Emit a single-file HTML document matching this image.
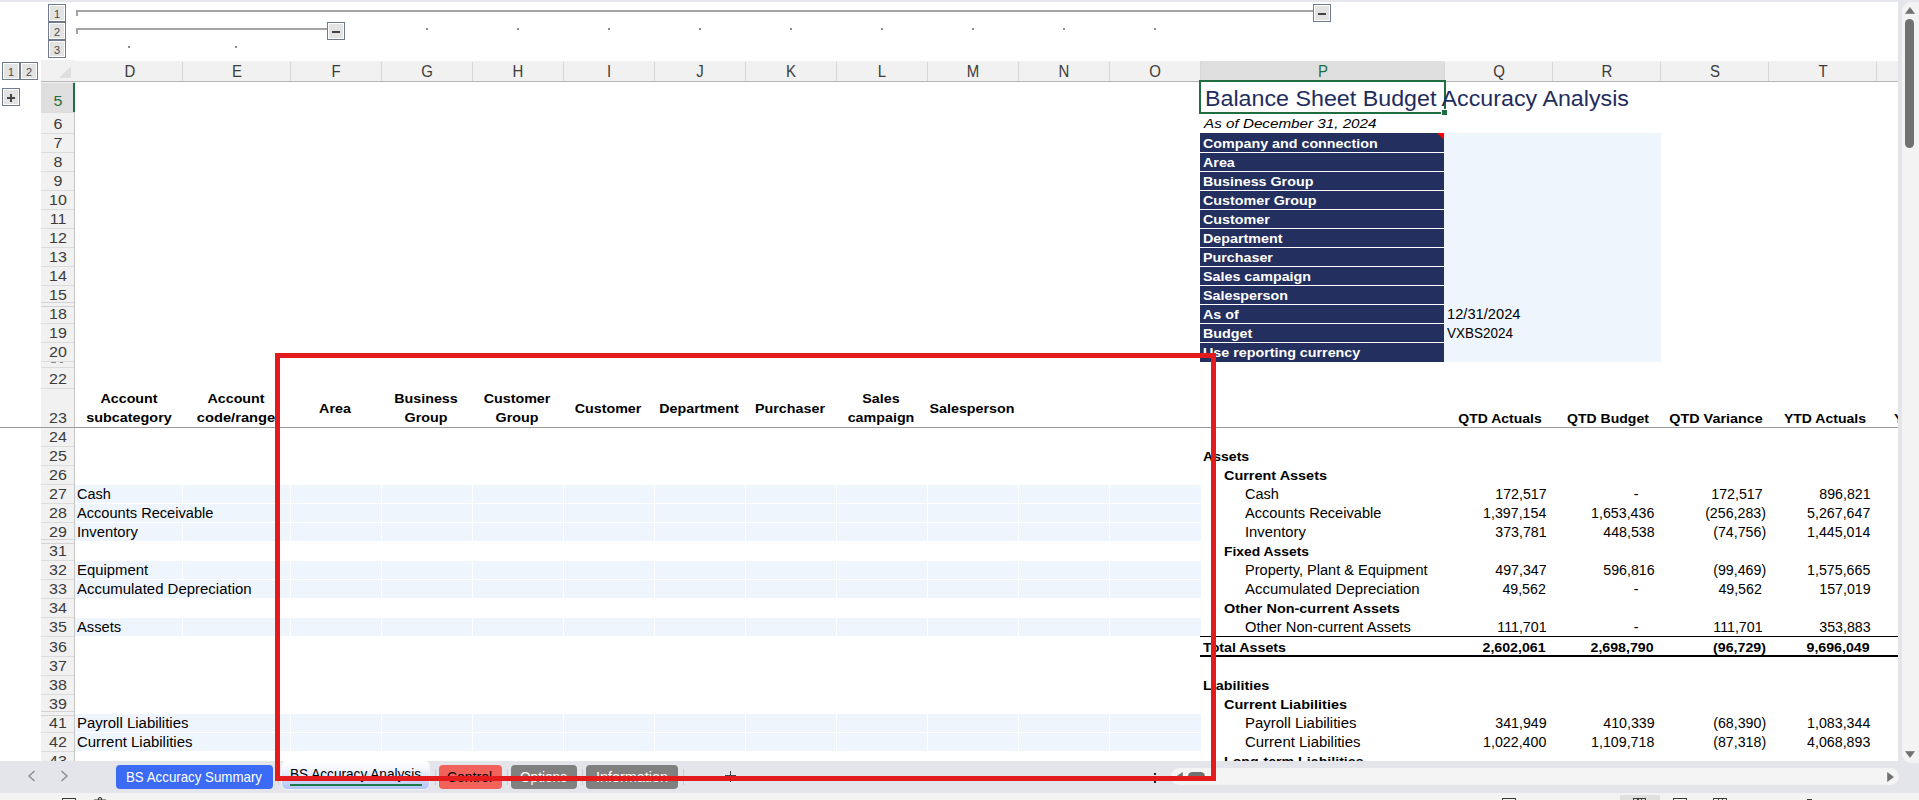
<!DOCTYPE html>
<html><head><meta charset="utf-8"><title>Balance Sheet Budget Accuracy Analysis</title><style>
html,body{margin:0;padding:0;background:#fff}
#r{position:relative;width:1919px;height:800px;overflow:hidden;background:#fff;font-family:'Liberation Sans',sans-serif}
#r div,#r span{position:absolute;box-sizing:content-box}
#r span{white-space:nowrap;line-height:1}
.ob{width:16px;height:16px;border:1px solid #6f7a8c;background:#fff}
.ob i{position:absolute;left:1px;top:1px;width:14px;height:14px;background:#e3e3e3}
</style></head>
<body><div id="r">
<div style="left:0px;top:0px;width:1919px;height:2px;background:#e5e7ec;"></div>
<div class="ob" style="left:48px;top:4px"><i></i></div>
<div class="ob" style="left:48px;top:22px"><i></i></div>
<div class="ob" style="left:48px;top:40px"><i></i></div>
<div style="left:76px;top:10px;width:1237px;height:2px;background:#a3a3a3;"></div>
<div style="left:76px;top:10px;width:2px;height:6px;background:#a3a3a3;"></div>
<div style="left:76px;top:28px;width:251px;height:2px;background:#a3a3a3;"></div>
<div style="left:76px;top:28px;width:2px;height:6px;background:#a3a3a3;"></div>
<div class="ob" style="left:1313px;top:4px"><i></i></div>
<div style="left:1318px;top:13px;width:8px;height:2px;background:#444;"></div>
<div class="ob" style="left:327px;top:22px"><i></i></div>
<div style="left:332px;top:31px;width:8px;height:2px;background:#444;"></div>
<div style="left:426px;top:28px;width:2px;height:2px;background:#8c8c8c;"></div>
<div style="left:517px;top:28px;width:2px;height:2px;background:#8c8c8c;"></div>
<div style="left:608px;top:28px;width:2px;height:2px;background:#8c8c8c;"></div>
<div style="left:699px;top:28px;width:2px;height:2px;background:#8c8c8c;"></div>
<div style="left:790px;top:28px;width:2px;height:2px;background:#8c8c8c;"></div>
<div style="left:881px;top:28px;width:2px;height:2px;background:#8c8c8c;"></div>
<div style="left:972px;top:28px;width:2px;height:2px;background:#8c8c8c;"></div>
<div style="left:1063px;top:28px;width:2px;height:2px;background:#8c8c8c;"></div>
<div style="left:1154px;top:28px;width:2px;height:2px;background:#8c8c8c;"></div>
<div style="left:128px;top:46px;width:2px;height:2px;background:#8c8c8c;"></div>
<div style="left:235px;top:46px;width:2px;height:2px;background:#8c8c8c;"></div>
<div class="ob" style="left:2px;top:62px"><i></i></div>
<div class="ob" style="left:20px;top:62px"><i></i></div>
<div class="ob" style="left:2px;top:88px"><i></i></div>
<div style="left:7px;top:96.7px;width:8px;height:2px;background:#444;"></div>
<div style="left:10px;top:93.7px;width:2px;height:8px;background:#444;"></div>
<div style="left:41px;top:60px;width:34px;height:21px;background:#f1f1f1;"></div>
<svg style="position:absolute;left:58px;top:65px" width="14" height="14"><path d="M13 1V13H1Z" fill="#dfdfdf"/></svg>
<div style="left:75px;top:61px;width:1823px;height:20px;background:#f1f1f1;"></div>
<div style="left:41px;top:81px;width:1857px;height:1px;background:#b5b5b5;"></div>
<div style="left:1200px;top:61px;width:244px;height:20px;background:#dedede;"></div>
<div style="left:1200px;top:80px;width:244px;height:2px;background:#1e6e42;"></div>
<div style="left:181.5px;top:62px;width:1px;height:19px;background:#d6d6d6;"></div>
<div style="left:289.5px;top:62px;width:1px;height:19px;background:#d6d6d6;"></div>
<div style="left:380.5px;top:62px;width:1px;height:19px;background:#d6d6d6;"></div>
<div style="left:471.5px;top:62px;width:1px;height:19px;background:#d6d6d6;"></div>
<div style="left:562.5px;top:62px;width:1px;height:19px;background:#d6d6d6;"></div>
<div style="left:653.5px;top:62px;width:1px;height:19px;background:#d6d6d6;"></div>
<div style="left:744.5px;top:62px;width:1px;height:19px;background:#d6d6d6;"></div>
<div style="left:835.5px;top:62px;width:1px;height:19px;background:#d6d6d6;"></div>
<div style="left:926.5px;top:62px;width:1px;height:19px;background:#d6d6d6;"></div>
<div style="left:1017.5px;top:62px;width:1px;height:19px;background:#d6d6d6;"></div>
<div style="left:1108.5px;top:62px;width:1px;height:19px;background:#d6d6d6;"></div>
<div style="left:1199.5px;top:62px;width:1px;height:19px;background:#d6d6d6;"></div>
<div style="left:1443.5px;top:62px;width:1px;height:19px;background:#d6d6d6;"></div>
<div style="left:1551.5px;top:62px;width:1px;height:19px;background:#d6d6d6;"></div>
<div style="left:1659.5px;top:62px;width:1px;height:19px;background:#d6d6d6;"></div>
<div style="left:1767.5px;top:62px;width:1px;height:19px;background:#d6d6d6;"></div>
<div style="left:1875.5px;top:62px;width:1px;height:19px;background:#d6d6d6;"></div>
<div style="left:41px;top:82px;width:33.5px;height:679px;background:#f1f1f1;"></div>
<div style="left:74px;top:82px;width:1px;height:679px;background:#c6c6c6;"></div>
<div style="left:41px;top:82.5px;width:33px;height:29.8px;background:#dedede;"></div>
<div style="left:73px;top:82.5px;width:1.8px;height:29.8px;background:#1e6e42;"></div>
<div style="left:41px;top:111.5px;width:33px;height:1px;background:#dcdcdc;"></div>
<div style="left:41px;top:132.5px;width:33px;height:1px;background:#dcdcdc;"></div>
<div style="left:41px;top:151.5px;width:33px;height:1px;background:#dcdcdc;"></div>
<div style="left:41px;top:170.5px;width:33px;height:1px;background:#dcdcdc;"></div>
<div style="left:41px;top:189.5px;width:33px;height:1px;background:#dcdcdc;"></div>
<div style="left:41px;top:208.5px;width:33px;height:1px;background:#dcdcdc;"></div>
<div style="left:41px;top:227.5px;width:33px;height:1px;background:#dcdcdc;"></div>
<div style="left:41px;top:246.5px;width:33px;height:1px;background:#dcdcdc;"></div>
<div style="left:41px;top:265.5px;width:33px;height:1px;background:#dcdcdc;"></div>
<div style="left:41px;top:284.5px;width:33px;height:1px;background:#dcdcdc;"></div>
<div style="left:41px;top:302px;width:33px;height:1px;background:#d4d4d4;"></div>
<div style="left:41px;top:306px;width:33px;height:1px;background:#d4d4d4;"></div>
<div style="left:41px;top:322.5px;width:33px;height:1px;background:#dcdcdc;"></div>
<div style="left:41px;top:341.5px;width:33px;height:1px;background:#dcdcdc;"></div>
<div style="left:41px;top:360.5px;width:33px;height:1px;background:#dcdcdc;"></div>
<div style="left:41px;top:387.5px;width:33px;height:1px;background:#dcdcdc;"></div>
<div style="left:41px;top:426.5px;width:33px;height:1px;background:#dcdcdc;"></div>
<div style="left:41px;top:445.5px;width:33px;height:1px;background:#dcdcdc;"></div>
<div style="left:41px;top:464.5px;width:33px;height:1px;background:#dcdcdc;"></div>
<div style="left:41px;top:483.5px;width:33px;height:1px;background:#dcdcdc;"></div>
<div style="left:41px;top:502.5px;width:33px;height:1px;background:#dcdcdc;"></div>
<div style="left:41px;top:521.5px;width:33px;height:1px;background:#dcdcdc;"></div>
<div style="left:41px;top:539px;width:33px;height:1px;background:#d4d4d4;"></div>
<div style="left:41px;top:543px;width:33px;height:1px;background:#d4d4d4;"></div>
<div style="left:41px;top:559.5px;width:33px;height:1px;background:#dcdcdc;"></div>
<div style="left:41px;top:578.5px;width:33px;height:1px;background:#dcdcdc;"></div>
<div style="left:41px;top:597.5px;width:33px;height:1px;background:#dcdcdc;"></div>
<div style="left:41px;top:616.5px;width:33px;height:1px;background:#dcdcdc;"></div>
<div style="left:41px;top:635.5px;width:33px;height:1px;background:#dcdcdc;"></div>
<div style="left:41px;top:655.5px;width:33px;height:1px;background:#dcdcdc;"></div>
<div style="left:41px;top:674.5px;width:33px;height:1px;background:#dcdcdc;"></div>
<div style="left:41px;top:693.5px;width:33px;height:1px;background:#dcdcdc;"></div>
<div style="left:41px;top:711px;width:33px;height:1px;background:#d4d4d4;"></div>
<div style="left:41px;top:715px;width:33px;height:1px;background:#d4d4d4;"></div>
<div style="left:41px;top:731.5px;width:33px;height:1px;background:#dcdcdc;"></div>
<div style="left:41px;top:750.5px;width:33px;height:1px;background:#dcdcdc;"></div>
<div style="left:41px;top:366.5px;width:33px;height:1px;background:#dcdcdc;"></div>
<div style="left:50.5px;top:362.3px;width:5px;height:1px;background:#8a8a8a;"></div>
<div style="left:60px;top:362.3px;width:2.5px;height:1px;background:#8a8a8a;"></div>
<div style="left:75px;top:485px;width:1125.7px;height:18px;background:#eef5fd;"></div>
<div style="left:181.7px;top:485px;width:1.3px;height:18px;background:#fff;"></div>
<div style="left:289.7px;top:485px;width:1.3px;height:18px;background:#fff;"></div>
<div style="left:380.7px;top:485px;width:1.3px;height:18px;background:#fff;"></div>
<div style="left:471.7px;top:485px;width:1.3px;height:18px;background:#fff;"></div>
<div style="left:562.7px;top:485px;width:1.3px;height:18px;background:#fff;"></div>
<div style="left:653.7px;top:485px;width:1.3px;height:18px;background:#fff;"></div>
<div style="left:744.7px;top:485px;width:1.3px;height:18px;background:#fff;"></div>
<div style="left:835.7px;top:485px;width:1.3px;height:18px;background:#fff;"></div>
<div style="left:926.7px;top:485px;width:1.3px;height:18px;background:#fff;"></div>
<div style="left:1017.7px;top:485px;width:1.3px;height:18px;background:#fff;"></div>
<div style="left:1108.7px;top:485px;width:1.3px;height:18px;background:#fff;"></div>
<div style="left:75px;top:504px;width:1125.7px;height:18px;background:#eef5fd;"></div>
<div style="left:289.7px;top:504px;width:1.3px;height:18px;background:#fff;"></div>
<div style="left:380.7px;top:504px;width:1.3px;height:18px;background:#fff;"></div>
<div style="left:471.7px;top:504px;width:1.3px;height:18px;background:#fff;"></div>
<div style="left:562.7px;top:504px;width:1.3px;height:18px;background:#fff;"></div>
<div style="left:653.7px;top:504px;width:1.3px;height:18px;background:#fff;"></div>
<div style="left:744.7px;top:504px;width:1.3px;height:18px;background:#fff;"></div>
<div style="left:835.7px;top:504px;width:1.3px;height:18px;background:#fff;"></div>
<div style="left:926.7px;top:504px;width:1.3px;height:18px;background:#fff;"></div>
<div style="left:1017.7px;top:504px;width:1.3px;height:18px;background:#fff;"></div>
<div style="left:1108.7px;top:504px;width:1.3px;height:18px;background:#fff;"></div>
<div style="left:75px;top:523px;width:1125.7px;height:18px;background:#eef5fd;"></div>
<div style="left:181.7px;top:523px;width:1.3px;height:18px;background:#fff;"></div>
<div style="left:289.7px;top:523px;width:1.3px;height:18px;background:#fff;"></div>
<div style="left:380.7px;top:523px;width:1.3px;height:18px;background:#fff;"></div>
<div style="left:471.7px;top:523px;width:1.3px;height:18px;background:#fff;"></div>
<div style="left:562.7px;top:523px;width:1.3px;height:18px;background:#fff;"></div>
<div style="left:653.7px;top:523px;width:1.3px;height:18px;background:#fff;"></div>
<div style="left:744.7px;top:523px;width:1.3px;height:18px;background:#fff;"></div>
<div style="left:835.7px;top:523px;width:1.3px;height:18px;background:#fff;"></div>
<div style="left:926.7px;top:523px;width:1.3px;height:18px;background:#fff;"></div>
<div style="left:1017.7px;top:523px;width:1.3px;height:18px;background:#fff;"></div>
<div style="left:1108.7px;top:523px;width:1.3px;height:18px;background:#fff;"></div>
<div style="left:75px;top:561px;width:1125.7px;height:18px;background:#eef5fd;"></div>
<div style="left:181.7px;top:561px;width:1.3px;height:18px;background:#fff;"></div>
<div style="left:289.7px;top:561px;width:1.3px;height:18px;background:#fff;"></div>
<div style="left:380.7px;top:561px;width:1.3px;height:18px;background:#fff;"></div>
<div style="left:471.7px;top:561px;width:1.3px;height:18px;background:#fff;"></div>
<div style="left:562.7px;top:561px;width:1.3px;height:18px;background:#fff;"></div>
<div style="left:653.7px;top:561px;width:1.3px;height:18px;background:#fff;"></div>
<div style="left:744.7px;top:561px;width:1.3px;height:18px;background:#fff;"></div>
<div style="left:835.7px;top:561px;width:1.3px;height:18px;background:#fff;"></div>
<div style="left:926.7px;top:561px;width:1.3px;height:18px;background:#fff;"></div>
<div style="left:1017.7px;top:561px;width:1.3px;height:18px;background:#fff;"></div>
<div style="left:1108.7px;top:561px;width:1.3px;height:18px;background:#fff;"></div>
<div style="left:75px;top:580px;width:1125.7px;height:18px;background:#eef5fd;"></div>
<div style="left:289.7px;top:580px;width:1.3px;height:18px;background:#fff;"></div>
<div style="left:380.7px;top:580px;width:1.3px;height:18px;background:#fff;"></div>
<div style="left:471.7px;top:580px;width:1.3px;height:18px;background:#fff;"></div>
<div style="left:562.7px;top:580px;width:1.3px;height:18px;background:#fff;"></div>
<div style="left:653.7px;top:580px;width:1.3px;height:18px;background:#fff;"></div>
<div style="left:744.7px;top:580px;width:1.3px;height:18px;background:#fff;"></div>
<div style="left:835.7px;top:580px;width:1.3px;height:18px;background:#fff;"></div>
<div style="left:926.7px;top:580px;width:1.3px;height:18px;background:#fff;"></div>
<div style="left:1017.7px;top:580px;width:1.3px;height:18px;background:#fff;"></div>
<div style="left:1108.7px;top:580px;width:1.3px;height:18px;background:#fff;"></div>
<div style="left:75px;top:618px;width:1125.7px;height:18px;background:#eef5fd;"></div>
<div style="left:181.7px;top:618px;width:1.3px;height:18px;background:#fff;"></div>
<div style="left:289.7px;top:618px;width:1.3px;height:18px;background:#fff;"></div>
<div style="left:380.7px;top:618px;width:1.3px;height:18px;background:#fff;"></div>
<div style="left:471.7px;top:618px;width:1.3px;height:18px;background:#fff;"></div>
<div style="left:562.7px;top:618px;width:1.3px;height:18px;background:#fff;"></div>
<div style="left:653.7px;top:618px;width:1.3px;height:18px;background:#fff;"></div>
<div style="left:744.7px;top:618px;width:1.3px;height:18px;background:#fff;"></div>
<div style="left:835.7px;top:618px;width:1.3px;height:18px;background:#fff;"></div>
<div style="left:926.7px;top:618px;width:1.3px;height:18px;background:#fff;"></div>
<div style="left:1017.7px;top:618px;width:1.3px;height:18px;background:#fff;"></div>
<div style="left:1108.7px;top:618px;width:1.3px;height:18px;background:#fff;"></div>
<div style="left:75px;top:714px;width:1125.7px;height:18px;background:#eef5fd;"></div>
<div style="left:289.7px;top:714px;width:1.3px;height:18px;background:#fff;"></div>
<div style="left:380.7px;top:714px;width:1.3px;height:18px;background:#fff;"></div>
<div style="left:471.7px;top:714px;width:1.3px;height:18px;background:#fff;"></div>
<div style="left:562.7px;top:714px;width:1.3px;height:18px;background:#fff;"></div>
<div style="left:653.7px;top:714px;width:1.3px;height:18px;background:#fff;"></div>
<div style="left:744.7px;top:714px;width:1.3px;height:18px;background:#fff;"></div>
<div style="left:835.7px;top:714px;width:1.3px;height:18px;background:#fff;"></div>
<div style="left:926.7px;top:714px;width:1.3px;height:18px;background:#fff;"></div>
<div style="left:1017.7px;top:714px;width:1.3px;height:18px;background:#fff;"></div>
<div style="left:1108.7px;top:714px;width:1.3px;height:18px;background:#fff;"></div>
<div style="left:75px;top:733px;width:1125.7px;height:18px;background:#eef5fd;"></div>
<div style="left:289.7px;top:733px;width:1.3px;height:18px;background:#fff;"></div>
<div style="left:380.7px;top:733px;width:1.3px;height:18px;background:#fff;"></div>
<div style="left:471.7px;top:733px;width:1.3px;height:18px;background:#fff;"></div>
<div style="left:562.7px;top:733px;width:1.3px;height:18px;background:#fff;"></div>
<div style="left:653.7px;top:733px;width:1.3px;height:18px;background:#fff;"></div>
<div style="left:744.7px;top:733px;width:1.3px;height:18px;background:#fff;"></div>
<div style="left:835.7px;top:733px;width:1.3px;height:18px;background:#fff;"></div>
<div style="left:926.7px;top:733px;width:1.3px;height:18px;background:#fff;"></div>
<div style="left:1017.7px;top:733px;width:1.3px;height:18px;background:#fff;"></div>
<div style="left:1108.7px;top:733px;width:1.3px;height:18px;background:#fff;"></div>
<div style="left:1444px;top:133px;width:217px;height:229px;background:#eef5fd;"></div>
<div style="left:1200px;top:133px;width:244.3px;height:19px;background:#232f5e;"></div>
<div style="left:1200px;top:153px;width:244.3px;height:18px;background:#232f5e;"></div>
<div style="left:1200px;top:172px;width:244.3px;height:18px;background:#232f5e;"></div>
<div style="left:1200px;top:191px;width:244.3px;height:18px;background:#232f5e;"></div>
<div style="left:1200px;top:210px;width:244.3px;height:18px;background:#232f5e;"></div>
<div style="left:1200px;top:229px;width:244.3px;height:18px;background:#232f5e;"></div>
<div style="left:1200px;top:248px;width:244.3px;height:18px;background:#232f5e;"></div>
<div style="left:1200px;top:267px;width:244.3px;height:18px;background:#232f5e;"></div>
<div style="left:1200px;top:286px;width:244.3px;height:18px;background:#232f5e;"></div>
<div style="left:1200px;top:305px;width:244.3px;height:18px;background:#232f5e;"></div>
<div style="left:1200px;top:324px;width:244.3px;height:18px;background:#232f5e;"></div>
<div style="left:1200px;top:343px;width:244.3px;height:19px;background:#232f5e;"></div>
<svg style="position:absolute;left:1437px;top:133px" width="7" height="7"><path d="M0 0H7V7Z" fill="#ff0000"/></svg>
<div style="left:1199px;top:80px;width:243px;height:30px;border:2px solid #1e6e42"></div>
<div style="left:1440.7px;top:108.6px;width:5.3px;height:5.3px;background:#1e6e42;border:1px solid #fff"></div>
<div style="left:1200px;top:636px;width:698px;height:1px;background:#000;"></div>
<div style="left:1200px;top:655px;width:698px;height:2px;background:#000;"></div>
<div style="left:0px;top:427px;width:1898px;height:1px;background:#9b9b9b;"></div>
<div style="left:0px;top:761px;width:1919px;height:32px;background:#e3e5ea;z-index:5"></div>
<div style="left:1898px;top:2px;width:21px;height:759px;background:#e3e5ea;z-index:5"></div>
<div style="left:1902px;top:2px;width:17px;height:761px;background:#f3f3f3;border-radius:9px 0 0 9px;z-index:6"></div>
<div style="left:1905px;top:19px;width:9px;height:129px;background:#707070;border-radius:5px;z-index:7"></div>
<svg style="position:absolute;left:1905px;top:7px;z-index:7" width="10" height="7"><path d="M5 0.5L9.5 6.5H0.5Z" fill="#707070" stroke="#707070" stroke-width="0.6" stroke-linejoin="round"/></svg>
<svg style="position:absolute;left:1905px;top:751px;z-index:7" width="10" height="7"><path d="M5 6.5L9.5 0.5H0.5Z" fill="#707070" stroke="#707070" stroke-width="0.6" stroke-linejoin="round"/></svg>
<div style="left:1171px;top:768px;width:728px;height:17px;background:#f4f4f4;border-radius:9px;z-index:6"></div>
<svg style="position:absolute;left:1887px;top:772px;z-index:7" width="7" height="10"><path d="M6.5 5L0.5 9.5V0.5Z" fill="#707070" stroke="#707070" stroke-width="0.6" stroke-linejoin="round"/></svg>
<svg style="position:absolute;left:1176px;top:772px;z-index:7" width="7" height="9"><path d="M0.5 4.5L6.5 8.5V0.5Z" fill="#707070" stroke="#707070" stroke-width="0.6" stroke-linejoin="round"/></svg>
<div style="left:1188px;top:772px;width:17px;height:9px;background:#707070;border-radius:5px;z-index:7"></div>
<div style="left:1154.2px;top:773.1px;width:1.9px;height:1.9px;background:#222;z-index:7"></div>
<div style="left:1154.2px;top:781.3px;width:1.9px;height:1.9px;background:#222;z-index:7"></div>
<div style="left:116px;top:765px;width:157px;height:24px;background:#3b6af5;border-radius:4px;z-index:6"></div>
<div style="left:282px;top:761px;width:147px;height:28px;background:linear-gradient(#ffffff 0%,#f6f8fe 25%,#e3e9fc 50%,#c3d0f9 80%,#b2c4f7 100%);border-radius:5px;box-shadow:0 0 0 1px rgba(255,255,255,0.55);z-index:6"></div>
<div style="left:290px;top:784px;width:132px;height:2px;background:#1e7b45;z-index:7"></div>
<div style="left:439px;top:765px;width:63px;height:24px;background:#f0625a;border-radius:4px;z-index:6"></div>
<div style="left:511px;top:765px;width:66px;height:24px;background:#808080;border-radius:4px;z-index:6"></div>
<div style="left:586px;top:765px;width:92px;height:24px;background:#808080;border-radius:4px;z-index:6"></div>
<div style="left:277.5px;top:769px;width:1px;height:16px;background:#c9ccd3;z-index:6"></div>
<div style="left:434.5px;top:769px;width:1px;height:16px;background:#c9ccd3;z-index:6"></div>
<div style="left:506.5px;top:769px;width:1px;height:16px;background:#c9ccd3;z-index:6"></div>
<div style="left:581.5px;top:769px;width:1px;height:16px;background:#c9ccd3;z-index:6"></div>
<div style="left:682.5px;top:769px;width:1px;height:16px;background:#c9ccd3;z-index:6"></div>
<svg style="position:absolute;left:27px;top:770px;z-index:7" width="10" height="12"><path d="M7.5 1L2 6L7.5 11" fill="none" stroke="#8a8a8a" stroke-width="1.3"/></svg>
<svg style="position:absolute;left:59px;top:770px;z-index:7" width="10" height="12"><path d="M2.5 1L8 6L2.5 11" fill="none" stroke="#8a8a8a" stroke-width="1.3"/></svg>
<div style="left:725.3px;top:775px;width:10.5px;height:1.3px;background:#444;z-index:7"></div>
<div style="left:729.8px;top:770.8px;width:1.3px;height:11px;background:#444;z-index:7"></div>
<div style="left:0px;top:793px;width:1919px;height:7px;background:#f3f3f3;z-index:6"></div>
<div style="left:62px;top:797.8px;width:11.6px;height:6px;border:1.2px solid #3a3a3a;z-index:7"></div>
<svg style="position:absolute;left:93px;top:796px;z-index:7" width="14" height="4"><path d="M5.5 4V2.5Q7 0.5 8.5 2.5V4M1 4.2H13" fill="none" stroke="#3a3a3a" stroke-width="1.2"/></svg>
<div style="left:1502px;top:798.4px;width:11.6px;height:6px;border:1.2px solid #3a3a3a;z-index:7"></div>
<div style="left:1620px;top:794.6px;width:40px;height:6px;background:#e0e0e0;z-index:6"></div>
<div style="left:1633px;top:797.6px;width:10.6px;height:6px;border:1.2px solid #3a3a3a;z-index:7"></div>
<div style="left:1637.3333333333333px;top:797.6px;width:1.2px;height:6px;background:#3a3a3a;z-index:7"></div>
<div style="left:1641.0666666666668px;top:797.6px;width:1.2px;height:6px;background:#3a3a3a;z-index:7"></div>
<div style="left:1673px;top:797.6px;width:11.6px;height:6px;border:1.2px solid #3a3a3a;z-index:7"></div>
<div style="left:1676px;top:799.8000000000001px;width:8px;height:4px;background:#3a3a3a;z-index:7"></div>
<div style="left:1713px;top:797.6px;width:11.6px;height:6px;border:1.2px solid #3a3a3a;z-index:7"></div>
<div style="left:1717.6666666666667px;top:797.6px;width:1.2px;height:6px;background:#3a3a3a;z-index:7"></div>
<div style="left:1721.7333333333333px;top:797.6px;width:1.2px;height:6px;background:#3a3a3a;z-index:7"></div>
<div style="left:1807px;top:798.8px;width:5px;height:1.5px;background:#3a3a3a;z-index:7"></div>
<div style="left:275px;top:353px;width:931px;height:418px;border:5px solid #e41b1c;z-index:20"></div>
<span style="top:8.69px;font-size:11px;color:#4a4a4a;left:57px;transform:translateX(-50%) ;">1</span>
<span style="top:26.69px;font-size:11px;color:#4a4a4a;left:57px;transform:translateX(-50%) ;">2</span>
<span style="top:44.69px;font-size:11px;color:#4a4a4a;left:57px;transform:translateX(-50%) ;">3</span>
<span style="top:66.69px;font-size:11px;color:#4a4a4a;left:11px;transform:translateX(-50%) ;">1</span>
<span style="top:66.69px;font-size:11px;color:#4a4a4a;left:29px;transform:translateX(-50%) ;">2</span>
<span style="top:63.99px;font-size:15.6px;color:#3b3b3b;left:129.8px;transform:translateX(-50%) scaleX(0.9600);">D</span>
<span style="top:63.99px;font-size:15.6px;color:#3b3b3b;left:236.8px;transform:translateX(-50%) scaleX(0.9600);">E</span>
<span style="top:63.99px;font-size:15.6px;color:#3b3b3b;left:336.3px;transform:translateX(-50%) scaleX(0.9600);">F</span>
<span style="top:63.99px;font-size:15.6px;color:#3b3b3b;left:427.3px;transform:translateX(-50%) scaleX(0.9600);">G</span>
<span style="top:63.99px;font-size:15.6px;color:#3b3b3b;left:518.3px;transform:translateX(-50%) scaleX(0.9600);">H</span>
<span style="top:63.99px;font-size:15.6px;color:#3b3b3b;left:609.3px;transform:translateX(-50%) scaleX(0.9600);">I</span>
<span style="top:63.99px;font-size:15.6px;color:#3b3b3b;left:700.3px;transform:translateX(-50%) scaleX(0.9600);">J</span>
<span style="top:63.99px;font-size:15.6px;color:#3b3b3b;left:791.3px;transform:translateX(-50%) scaleX(0.9600);">K</span>
<span style="top:63.99px;font-size:15.6px;color:#3b3b3b;left:882.3px;transform:translateX(-50%) scaleX(0.9600);">L</span>
<span style="top:63.99px;font-size:15.6px;color:#3b3b3b;left:973.3px;transform:translateX(-50%) scaleX(0.9600);">M</span>
<span style="top:63.99px;font-size:15.6px;color:#3b3b3b;left:1064.3px;transform:translateX(-50%) scaleX(0.9600);">N</span>
<span style="top:63.99px;font-size:15.6px;color:#3b3b3b;left:1155.3px;transform:translateX(-50%) scaleX(0.9600);">O</span>
<span style="top:63.99px;font-size:15.6px;color:#1e6e42;left:1322.8px;transform:translateX(-50%) scaleX(0.9600);">P</span>
<span style="top:63.99px;font-size:15.6px;color:#3b3b3b;left:1498.8px;transform:translateX(-50%) scaleX(0.9600);">Q</span>
<span style="top:63.99px;font-size:15.6px;color:#3b3b3b;left:1606.8px;transform:translateX(-50%) scaleX(0.9600);">R</span>
<span style="top:63.99px;font-size:15.6px;color:#3b3b3b;left:1714.8px;transform:translateX(-50%) scaleX(0.9600);">S</span>
<span style="top:63.99px;font-size:15.6px;color:#3b3b3b;left:1822.8px;transform:translateX(-50%) scaleX(0.9600);">T</span>
<span style="top:92.96px;font-size:15.4px;color:#1e6e42;left:58px;transform:translateX(-50%) scaleX(1.0400);">5</span>
<span style="top:115.96px;font-size:15.4px;color:#3b3b3b;left:58px;transform:translateX(-50%) scaleX(1.0400);">6</span>
<span style="top:134.96px;font-size:15.4px;color:#3b3b3b;left:58px;transform:translateX(-50%) scaleX(1.0400);">7</span>
<span style="top:153.96px;font-size:15.4px;color:#3b3b3b;left:58px;transform:translateX(-50%) scaleX(1.0400);">8</span>
<span style="top:172.96px;font-size:15.4px;color:#3b3b3b;left:58px;transform:translateX(-50%) scaleX(1.0400);">9</span>
<span style="top:191.96px;font-size:15.4px;color:#3b3b3b;left:58px;transform:translateX(-50%) scaleX(1.0400);">10</span>
<span style="top:210.96px;font-size:15.4px;color:#3b3b3b;left:58px;transform:translateX(-50%) scaleX(1.0400);">11</span>
<span style="top:229.96px;font-size:15.4px;color:#3b3b3b;left:58px;transform:translateX(-50%) scaleX(1.0400);">12</span>
<span style="top:248.96px;font-size:15.4px;color:#3b3b3b;left:58px;transform:translateX(-50%) scaleX(1.0400);">13</span>
<span style="top:267.96px;font-size:15.4px;color:#3b3b3b;left:58px;transform:translateX(-50%) scaleX(1.0400);">14</span>
<span style="top:286.96px;font-size:15.4px;color:#3b3b3b;left:58px;transform:translateX(-50%) scaleX(1.0400);">15</span>
<span style="top:305.96px;font-size:15.4px;color:#3b3b3b;left:58px;transform:translateX(-50%) scaleX(1.0400);">18</span>
<span style="top:324.96px;font-size:15.4px;color:#3b3b3b;left:58px;transform:translateX(-50%) scaleX(1.0400);">19</span>
<span style="top:343.96px;font-size:15.4px;color:#3b3b3b;left:58px;transform:translateX(-50%) scaleX(1.0400);">20</span>
<span style="top:370.96px;font-size:15.4px;color:#3b3b3b;left:58px;transform:translateX(-50%) scaleX(1.0400);">22</span>
<span style="top:409.96px;font-size:15.4px;color:#3b3b3b;left:58px;transform:translateX(-50%) scaleX(1.0400);">23</span>
<span style="top:428.96px;font-size:15.4px;color:#3b3b3b;left:58px;transform:translateX(-50%) scaleX(1.0400);">24</span>
<span style="top:447.96px;font-size:15.4px;color:#3b3b3b;left:58px;transform:translateX(-50%) scaleX(1.0400);">25</span>
<span style="top:466.96px;font-size:15.4px;color:#3b3b3b;left:58px;transform:translateX(-50%) scaleX(1.0400);">26</span>
<span style="top:485.96px;font-size:15.4px;color:#3b3b3b;left:58px;transform:translateX(-50%) scaleX(1.0400);">27</span>
<span style="top:504.96px;font-size:15.4px;color:#3b3b3b;left:58px;transform:translateX(-50%) scaleX(1.0400);">28</span>
<span style="top:523.96px;font-size:15.4px;color:#3b3b3b;left:58px;transform:translateX(-50%) scaleX(1.0400);">29</span>
<span style="top:542.96px;font-size:15.4px;color:#3b3b3b;left:58px;transform:translateX(-50%) scaleX(1.0400);">31</span>
<span style="top:561.96px;font-size:15.4px;color:#3b3b3b;left:58px;transform:translateX(-50%) scaleX(1.0400);">32</span>
<span style="top:580.96px;font-size:15.4px;color:#3b3b3b;left:58px;transform:translateX(-50%) scaleX(1.0400);">33</span>
<span style="top:599.96px;font-size:15.4px;color:#3b3b3b;left:58px;transform:translateX(-50%) scaleX(1.0400);">34</span>
<span style="top:618.96px;font-size:15.4px;color:#3b3b3b;left:58px;transform:translateX(-50%) scaleX(1.0400);">35</span>
<span style="top:638.96px;font-size:15.4px;color:#3b3b3b;left:58px;transform:translateX(-50%) scaleX(1.0400);">36</span>
<span style="top:657.96px;font-size:15.4px;color:#3b3b3b;left:58px;transform:translateX(-50%) scaleX(1.0400);">37</span>
<span style="top:676.96px;font-size:15.4px;color:#3b3b3b;left:58px;transform:translateX(-50%) scaleX(1.0400);">38</span>
<span style="top:695.96px;font-size:15.4px;color:#3b3b3b;left:58px;transform:translateX(-50%) scaleX(1.0400);">39</span>
<span style="top:714.96px;font-size:15.4px;color:#3b3b3b;left:58px;transform:translateX(-50%) scaleX(1.0400);">41</span>
<span style="top:733.96px;font-size:15.4px;color:#3b3b3b;left:58px;transform:translateX(-50%) scaleX(1.0400);">42</span>
<span style="top:752.96px;font-size:15.4px;color:#3b3b3b;left:58px;transform:translateX(-50%) scaleX(1.0400);">43</span>
<span style="top:136.66px;font-size:13.4px;color:#fff;font-weight:700;left:1203.3px;transform-origin:0 0;transform:scaleX(1.0670);">Company and connection</span>
<span style="top:155.66px;font-size:13.4px;color:#fff;font-weight:700;left:1203.3px;transform-origin:0 0;transform:scaleX(1.0670);">Area</span>
<span style="top:174.66px;font-size:13.4px;color:#fff;font-weight:700;left:1203.3px;transform-origin:0 0;transform:scaleX(1.0670);">Business Group</span>
<span style="top:193.66px;font-size:13.4px;color:#fff;font-weight:700;left:1203.3px;transform-origin:0 0;transform:scaleX(1.0670);">Customer Group</span>
<span style="top:212.66px;font-size:13.4px;color:#fff;font-weight:700;left:1203.3px;transform-origin:0 0;transform:scaleX(1.0670);">Customer</span>
<span style="top:231.66px;font-size:13.4px;color:#fff;font-weight:700;left:1203.3px;transform-origin:0 0;transform:scaleX(1.0670);">Department</span>
<span style="top:250.66px;font-size:13.4px;color:#fff;font-weight:700;left:1203.3px;transform-origin:0 0;transform:scaleX(1.0670);">Purchaser</span>
<span style="top:269.66px;font-size:13.4px;color:#fff;font-weight:700;left:1203.3px;transform-origin:0 0;transform:scaleX(1.0670);">Sales campaign</span>
<span style="top:288.66px;font-size:13.4px;color:#fff;font-weight:700;left:1203.3px;transform-origin:0 0;transform:scaleX(1.0670);">Salesperson</span>
<span style="top:307.66px;font-size:13.4px;color:#fff;font-weight:700;left:1203.3px;transform-origin:0 0;transform:scaleX(1.0670);">As of</span>
<span style="top:326.66px;font-size:13.4px;color:#fff;font-weight:700;left:1203.3px;transform-origin:0 0;transform:scaleX(1.0670);">Budget</span>
<span style="top:345.66px;font-size:13.4px;color:#fff;font-weight:700;left:1203.3px;transform-origin:0 0;transform:scaleX(1.0670);">Use reporting currency</span>
<span style="top:307.15px;font-size:14px;color:#000;left:1447.3px;transform-origin:0 0;transform:scaleX(1.0488);">12/31/2024</span>
<span style="top:326.15px;font-size:14px;color:#000;left:1447.3px;transform-origin:0 0;transform:scaleX(0.9635);">VXBS2024</span>
<span style="top:87.88px;font-size:22px;color:#1f2d5c;left:1205.3px;transform-origin:0 0;transform:scaleX(1.0570);">Balance Sheet Budget Accuracy Analysis</span>
<span style="top:117.49px;font-size:13.6px;color:#000;font-style:italic;left:1203.6px;transform-origin:0 0;transform:scaleX(1.1190);">As of December 31, 2024</span>
<span style="top:391.66px;font-size:13.4px;color:#000;font-weight:700;left:128.5px;transform:translateX(-50%) scaleX(1.0670);">Account</span>
<span style="top:410.66px;font-size:13.4px;color:#000;font-weight:700;left:128.5px;transform:translateX(-50%) scaleX(1.0738);">subcategory</span>
<span style="top:391.66px;font-size:13.4px;color:#000;font-weight:700;left:235.5px;transform:translateX(-50%) scaleX(1.0670);">Account</span>
<span style="top:410.66px;font-size:13.4px;color:#000;font-weight:700;left:235.5px;transform:translateX(-50%) scaleX(1.0986);">code/range</span>
<span style="top:401.66px;font-size:13.4px;color:#000;font-weight:700;left:335.0px;transform:translateX(-50%) scaleX(1.0670);">Area</span>
<span style="top:391.66px;font-size:13.4px;color:#000;font-weight:700;left:426.0px;transform:translateX(-50%) scaleX(1.0670);">Business</span>
<span style="top:410.66px;font-size:13.4px;color:#000;font-weight:700;left:426.0px;transform:translateX(-50%) scaleX(1.0670);">Group</span>
<span style="top:391.66px;font-size:13.4px;color:#000;font-weight:700;left:517.0px;transform:translateX(-50%) scaleX(1.0670);">Customer</span>
<span style="top:410.66px;font-size:13.4px;color:#000;font-weight:700;left:517.0px;transform:translateX(-50%) scaleX(1.0670);">Group</span>
<span style="top:401.66px;font-size:13.4px;color:#000;font-weight:700;left:608.0px;transform:translateX(-50%) scaleX(1.0670);">Customer</span>
<span style="top:401.66px;font-size:13.4px;color:#000;font-weight:700;left:699.0px;transform:translateX(-50%) scaleX(1.0670);">Department</span>
<span style="top:401.66px;font-size:13.4px;color:#000;font-weight:700;left:790.0px;transform:translateX(-50%) scaleX(1.0670);">Purchaser</span>
<span style="top:391.66px;font-size:13.4px;color:#000;font-weight:700;left:881.0px;transform:translateX(-50%) scaleX(1.0670);">Sales</span>
<span style="top:410.66px;font-size:13.4px;color:#000;font-weight:700;left:881.0px;transform:translateX(-50%) scaleX(1.0670);">campaign</span>
<span style="top:401.66px;font-size:13.4px;color:#000;font-weight:700;left:972.0px;transform:translateX(-50%) scaleX(1.0670);">Salesperson</span>
<span style="top:411.66px;font-size:13.4px;color:#000;font-weight:700;left:1500px;transform:translateX(-50%) scaleX(1.0441);">QTD Actuals</span>
<span style="top:411.66px;font-size:13.4px;color:#000;font-weight:700;left:1607.6px;transform:translateX(-50%) scaleX(1.0472);">QTD Budget</span>
<span style="top:411.66px;font-size:13.4px;color:#000;font-weight:700;left:1715.8px;transform:translateX(-50%) scaleX(1.0726);">QTD Variance</span>
<span style="top:411.66px;font-size:13.4px;color:#000;font-weight:700;left:1824.6px;transform:translateX(-50%) scaleX(1.0486);">YTD Actuals</span>
<span style="top:411.66px;font-size:13.4px;color:#000;font-weight:700;left:1894px;transform-origin:0 0;transform:scaleX(1.0670);">Y</span>
<span style="top:487.15px;font-size:14px;color:#000;left:77.3px;transform-origin:0 0;transform:scaleX(1.0340);">Cash</span>
<span style="top:506.15px;font-size:14px;color:#000;left:77.3px;transform-origin:0 0;transform:scaleX(1.0432);">Accounts Receivable</span>
<span style="top:525.15px;font-size:14px;color:#000;left:77.3px;transform-origin:0 0;transform:scaleX(1.0557);">Inventory</span>
<span style="top:563.15px;font-size:14px;color:#000;left:77.3px;transform-origin:0 0;transform:scaleX(1.0622);">Equipment</span>
<span style="top:582.15px;font-size:14px;color:#000;left:77.3px;transform-origin:0 0;transform:scaleX(1.0684);">Accumulated Depreciation</span>
<span style="top:620.15px;font-size:14px;color:#000;left:77.3px;transform-origin:0 0;transform:scaleX(1.0496);">Assets</span>
<span style="top:716.15px;font-size:14px;color:#000;left:77.3px;transform-origin:0 0;transform:scaleX(1.0692);">Payroll Liabilities</span>
<span style="top:735.15px;font-size:14px;color:#000;left:77.3px;transform-origin:0 0;transform:scaleX(1.0677);">Current Liabilities</span>
<span style="top:449.66px;font-size:13.4px;color:#000;font-weight:700;left:1203.3px;transform-origin:0 0;transform:scaleX(1.0519);">Assets</span>
<span style="top:468.66px;font-size:13.4px;color:#000;font-weight:700;left:1224.3px;transform-origin:0 0;transform:scaleX(1.0785);">Current Assets</span>
<span style="top:487.15px;font-size:14px;color:#000;left:1245.3px;transform-origin:0 0;transform:scaleX(1.0340);">Cash</span>
<span style="top:487.15px;font-size:14px;color:#000;right:372.80px;transform-origin:100% 0;transform:scaleX(1.0145);">172,517</span>
<span style="top:487.15px;font-size:14px;color:#000;left:1635.7px;transform:translateX(-50%) scaleX(1.0145);">-</span>
<span style="top:487.15px;font-size:14px;color:#000;right:156.80px;transform-origin:100% 0;transform:scaleX(1.0145);">172,517</span>
<span style="top:487.15px;font-size:14px;color:#000;right:48.80px;transform-origin:100% 0;transform:scaleX(1.0145);">896,821</span>
<span style="top:506.15px;font-size:14px;color:#000;left:1245.3px;transform-origin:0 0;transform:scaleX(1.0432);">Accounts Receivable</span>
<span style="top:506.15px;font-size:14px;color:#000;right:372.80px;transform-origin:100% 0;transform:scaleX(1.0145);">1,397,154</span>
<span style="top:506.15px;font-size:14px;color:#000;right:264.80px;transform-origin:100% 0;transform:scaleX(1.0145);">1,653,436</span>
<span style="top:506.15px;font-size:14px;color:#000;right:152.80px;transform-origin:100% 0;transform:scaleX(1.0145);">(256,283)</span>
<span style="top:506.15px;font-size:14px;color:#000;right:48.80px;transform-origin:100% 0;transform:scaleX(1.0145);">5,267,647</span>
<span style="top:525.15px;font-size:14px;color:#000;left:1245.3px;transform-origin:0 0;transform:scaleX(1.0557);">Inventory</span>
<span style="top:525.15px;font-size:14px;color:#000;right:372.80px;transform-origin:100% 0;transform:scaleX(1.0145);">373,781</span>
<span style="top:525.15px;font-size:14px;color:#000;right:264.80px;transform-origin:100% 0;transform:scaleX(1.0145);">448,538</span>
<span style="top:525.15px;font-size:14px;color:#000;right:152.80px;transform-origin:100% 0;transform:scaleX(1.0145);">(74,756)</span>
<span style="top:525.15px;font-size:14px;color:#000;right:48.80px;transform-origin:100% 0;transform:scaleX(1.0145);">1,445,014</span>
<span style="top:544.66px;font-size:13.4px;color:#000;font-weight:700;left:1224.3px;transform-origin:0 0;transform:scaleX(1.0350);">Fixed Assets</span>
<span style="top:563.15px;font-size:14px;color:#000;left:1245.3px;transform-origin:0 0;transform:scaleX(1.0398);">Property, Plant &amp; Equipment</span>
<span style="top:563.15px;font-size:14px;color:#000;right:372.80px;transform-origin:100% 0;transform:scaleX(1.0145);">497,347</span>
<span style="top:563.15px;font-size:14px;color:#000;right:264.80px;transform-origin:100% 0;transform:scaleX(1.0145);">596,816</span>
<span style="top:563.15px;font-size:14px;color:#000;right:152.80px;transform-origin:100% 0;transform:scaleX(1.0145);">(99,469)</span>
<span style="top:563.15px;font-size:14px;color:#000;right:48.80px;transform-origin:100% 0;transform:scaleX(1.0145);">1,575,665</span>
<span style="top:582.15px;font-size:14px;color:#000;left:1245.3px;transform-origin:0 0;transform:scaleX(1.0684);">Accumulated Depreciation</span>
<span style="top:582.15px;font-size:14px;color:#000;right:372.80px;transform-origin:100% 0;transform:scaleX(1.0145);">49,562</span>
<span style="top:582.15px;font-size:14px;color:#000;left:1635.7px;transform:translateX(-50%) scaleX(1.0145);">-</span>
<span style="top:582.15px;font-size:14px;color:#000;right:156.80px;transform-origin:100% 0;transform:scaleX(1.0145);">49,562</span>
<span style="top:582.15px;font-size:14px;color:#000;right:48.80px;transform-origin:100% 0;transform:scaleX(1.0145);">157,019</span>
<span style="top:601.66px;font-size:13.4px;color:#000;font-weight:700;left:1224.3px;transform-origin:0 0;transform:scaleX(1.0772);">Other Non-current Assets</span>
<span style="top:620.15px;font-size:14px;color:#000;left:1245.3px;transform-origin:0 0;transform:scaleX(1.0497);">Other Non-current Assets</span>
<span style="top:620.15px;font-size:14px;color:#000;right:372.80px;transform-origin:100% 0;transform:scaleX(1.0145);">111,701</span>
<span style="top:620.15px;font-size:14px;color:#000;left:1635.7px;transform:translateX(-50%) scaleX(1.0145);">-</span>
<span style="top:620.15px;font-size:14px;color:#000;right:156.80px;transform-origin:100% 0;transform:scaleX(1.0145);">111,701</span>
<span style="top:620.15px;font-size:14px;color:#000;right:48.80px;transform-origin:100% 0;transform:scaleX(1.0145);">353,883</span>
<span style="top:640.66px;font-size:13.4px;color:#000;font-weight:700;left:1203.3px;transform-origin:0 0;transform:scaleX(1.0622);">Total Assets</span>
<span style="top:640.66px;font-size:13.4px;color:#000;font-weight:700;right:373.80px;transform-origin:100% 0;transform:scaleX(1.0580);">2,602,061</span>
<span style="top:640.66px;font-size:13.4px;color:#000;font-weight:700;right:265.80px;transform-origin:100% 0;transform:scaleX(1.0580);">2,698,790</span>
<span style="top:640.66px;font-size:13.4px;color:#000;font-weight:700;right:152.80px;transform-origin:100% 0;transform:scaleX(1.0580);">(96,729)</span>
<span style="top:640.66px;font-size:13.4px;color:#000;font-weight:700;right:49.80px;transform-origin:100% 0;transform:scaleX(1.0580);">9,696,049</span>
<span style="top:678.66px;font-size:13.4px;color:#000;font-weight:700;left:1203.3px;transform-origin:0 0;transform:scaleX(1.0718);">Liabilities</span>
<span style="top:697.66px;font-size:13.4px;color:#000;font-weight:700;left:1224.3px;transform-origin:0 0;transform:scaleX(1.0804);">Current Liabilities</span>
<span style="top:716.15px;font-size:14px;color:#000;left:1245.3px;transform-origin:0 0;transform:scaleX(1.0692);">Payroll Liabilities</span>
<span style="top:716.15px;font-size:14px;color:#000;right:372.80px;transform-origin:100% 0;transform:scaleX(1.0145);">341,949</span>
<span style="top:716.15px;font-size:14px;color:#000;right:264.80px;transform-origin:100% 0;transform:scaleX(1.0145);">410,339</span>
<span style="top:716.15px;font-size:14px;color:#000;right:152.80px;transform-origin:100% 0;transform:scaleX(1.0145);">(68,390)</span>
<span style="top:716.15px;font-size:14px;color:#000;right:48.80px;transform-origin:100% 0;transform:scaleX(1.0145);">1,083,344</span>
<span style="top:735.15px;font-size:14px;color:#000;left:1245.3px;transform-origin:0 0;transform:scaleX(1.0677);">Current Liabilities</span>
<span style="top:735.15px;font-size:14px;color:#000;right:372.80px;transform-origin:100% 0;transform:scaleX(1.0145);">1,022,400</span>
<span style="top:735.15px;font-size:14px;color:#000;right:264.80px;transform-origin:100% 0;transform:scaleX(1.0145);">1,109,718</span>
<span style="top:735.15px;font-size:14px;color:#000;right:152.80px;transform-origin:100% 0;transform:scaleX(1.0145);">(87,318)</span>
<span style="top:735.15px;font-size:14px;color:#000;right:48.80px;transform-origin:100% 0;transform:scaleX(1.0145);">4,068,893</span>
<span style="top:754.66px;font-size:13.4px;color:#000;font-weight:700;left:1224.3px;transform-origin:0 0;transform:scaleX(1.0601);">Long-term Liabilities</span>
<span style="top:769.73px;font-size:14.5px;color:#fff;left:126px;transform-origin:0 0;transform:scaleX(0.9173);z-index:8;">BS Accuracy Summary</span>
<span style="top:766.73px;font-size:14.5px;color:#000;left:290px;transform-origin:0 0;transform:scaleX(0.9396);z-index:8;">BS Accuracy Analysis</span>
<span style="top:769.73px;font-size:14.5px;color:#000;left:447px;transform-origin:0 0;transform:scaleX(0.9626);z-index:8;">Control</span>
<span style="top:769.73px;font-size:14.5px;color:#fff;left:520px;transform-origin:0 0;transform:scaleX(0.9403);z-index:8;">Options</span>
<span style="top:769.73px;font-size:14.5px;color:#fff;left:596px;transform-origin:0 0;transform:scaleX(0.9925);z-index:8;">Information</span>
</div></body></html>
